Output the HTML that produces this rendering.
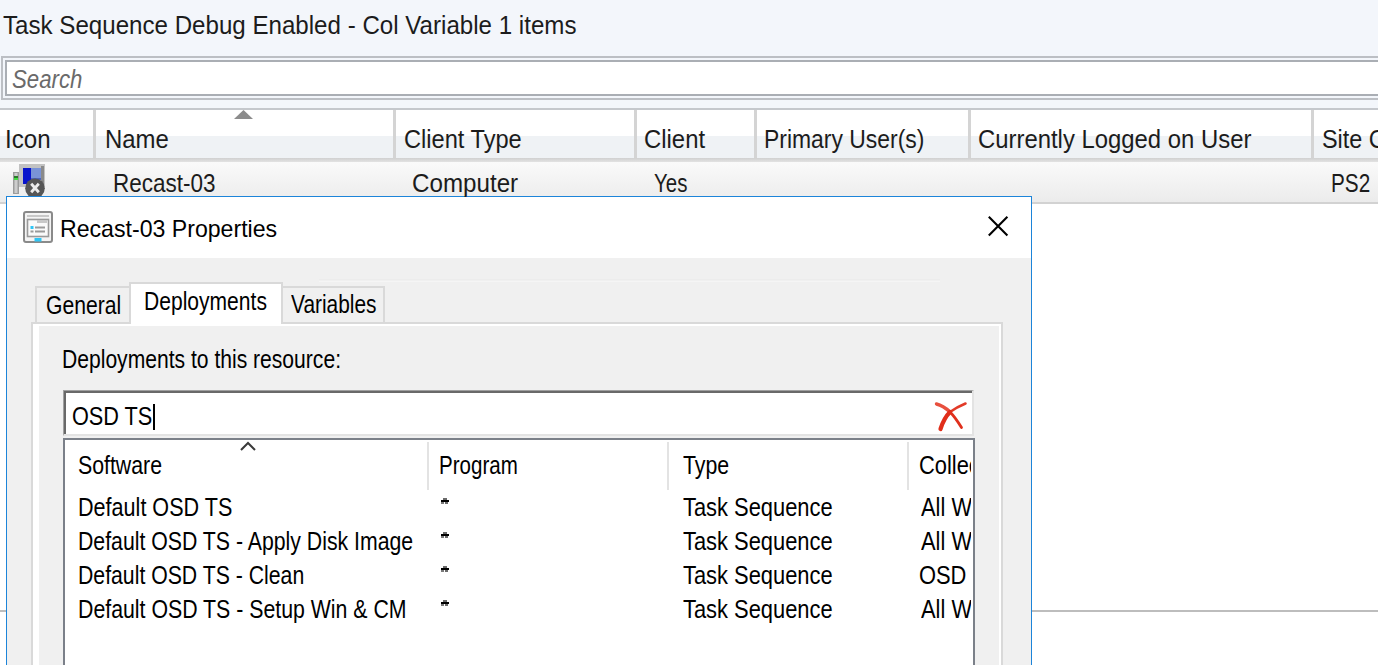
<!DOCTYPE html>
<html><head><meta charset="utf-8">
<style>
html,body{margin:0;padding:0;width:1378px;height:665px;overflow:hidden;background:#fff;position:relative}
*{box-sizing:border-box}
.a{position:absolute}
.t{position:absolute;font-family:"Liberation Sans",sans-serif;white-space:nowrap;line-height:1;transform-origin:0 0}
</style></head><body>
<!-- console top band -->
<div class="a" style="left:0;top:0;width:1378px;height:108px;background:#f3f6fb"></div>
<!-- search box -->
<div class="a" style="left:1px;top:56px;width:1390px;height:44px;border:2px solid #bcbfc4;background:#f3f6fb"></div>
<div class="a" style="left:5px;top:60px;width:1390px;height:36px;border:2px solid #aaaeb4;background:#fff"></div>
<!-- header -->
<div class="a" style="left:0;top:108px;width:1378px;height:2px;background:#c5c8cd"></div>
<div class="a" style="left:0;top:110px;width:1378px;height:26px;background:#fff"></div>
<div class="a" style="left:0;top:136px;width:1378px;height:22px;background:#eff2f5"></div>
<div class="a" style="left:0;top:158px;width:1378px;height:4px;background:linear-gradient(#d0d0d0,#e2e2e2)"></div>
<div class="a" style="left:93px;top:110px;width:3px;height:48px;background:#d4d4d4"></div>
<div class="a" style="left:393px;top:110px;width:3px;height:48px;background:#d4d4d4"></div>
<div class="a" style="left:634px;top:110px;width:3px;height:48px;background:#d4d4d4"></div>
<div class="a" style="left:754px;top:110px;width:3px;height:48px;background:#d4d4d4"></div>
<div class="a" style="left:968px;top:110px;width:3px;height:48px;background:#d4d4d4"></div>
<div class="a" style="left:1311px;top:110px;width:3px;height:48px;background:#d4d4d4"></div>
<svg class="a" style="left:234px;top:110px" width="19" height="10"><polygon points="0,9 9.5,0 19,9" fill="#8c8c8c"/></svg>
<!-- row -->
<div class="a" style="left:0;top:162px;width:1378px;height:41px;background:linear-gradient(#fafafa,#ebebeb)"></div>
<div class="a" style="left:0;top:202px;width:1378px;height:2px;background:#d2d2d2"></div>
<!-- computer icon -->
<svg class="a" style="left:12px;top:163px" width="36" height="34" viewBox="0 0 36 34">
 <rect x="1" y="9" width="6" height="22" fill="#9c9c9c"/>
 <rect x="2.5" y="10" width="3" height="20" fill="#cdcdcd"/>
 <rect x="2" y="13" width="4" height="2" fill="#2a7a2a"/>
 <rect x="2" y="15" width="4" height="2" fill="#44dd44"/>
 <rect x="7" y="1" width="26" height="23" fill="#c2c2c2"/>
 <rect x="29" y="3" width="3" height="20" fill="#8a8a8a"/>
 <rect x="11" y="5" width="18" height="12" fill="#7a93d6"/>
 <rect x="11" y="5" width="8" height="16" fill="#0814cc"/>
 <rect x="19" y="15" width="10" height="2" fill="#5064b8"/>
 <circle cx="23" cy="25.2" r="9.8" fill="#565656"/>
 <path d="M19.2 20.8 L26.8 29.2 M26.8 20.8 L19.2 29.2" stroke="#ececec" stroke-width="2.8"/>
</svg>
<!-- bottom line at right -->
<div class="a" style="left:0;top:610px;width:1378px;height:2px;background:#bdbdbd"></div>

<!-- dialog -->
<div class="a" style="left:6px;top:196px;width:1026px;height:480px;border:1px solid #1c84d9;background:#f0f0f0"></div>
<div class="a" style="left:7px;top:197px;width:1024px;height:61px;background:#fff"></div>
<!-- dialog icon -->
<svg class="a" style="left:23px;top:211px" width="30" height="32" viewBox="0 0 30 32">
 <rect x="1" y="1" width="28" height="30" rx="2" fill="#f4f4f4" stroke="#8a8a8a" stroke-width="2"/>
 <rect x="4" y="4" width="22" height="2" fill="#c8c8c8"/>
 <rect x="4.5" y="8.5" width="21" height="17" fill="#fafafa" stroke="#9a9a9a" stroke-width="1.6"/>
 <rect x="14" y="9" width="10" height="3" fill="#c8c8c8"/>
 <rect x="7.5" y="15" width="3" height="3" fill="#2ec5f5"/>
 <rect x="12" y="15.5" width="10" height="2" fill="#9a9a9a"/>
 <rect x="7.5" y="19.5" width="3" height="2" fill="#9a9a9a"/>
 <rect x="12" y="19.5" width="10" height="2" fill="#9a9a9a"/>
 <rect x="11.5" y="27" width="7" height="3.5" fill="#2ec5f5"/>
</svg>
<svg class="a" style="left:986px;top:214px" width="24" height="24"><path d="M2.8 2.8 L21.4 21.4 M21.4 2.8 L2.8 21.4" stroke="#000" stroke-width="2.1"/></svg>

<!-- tab panel -->
<div class="a" style="left:31px;top:322px;width:972px;height:400px;border:2px solid #d9d9d9;background:#fff"></div>
<div class="a" style="left:39px;top:326px;width:960px;height:400px;background:#f0f0f0"></div>
<div class="a" style="left:319px;top:279px;width:621px;height:1px;background:#ececec"></div><div class="a" style="left:319px;top:281px;width:621px;height:1px;background:#f5f5f5"></div>
<!-- tabs -->
<div class="a" style="left:35px;top:286px;width:96px;height:38px;border:2px solid #d9d9d9;border-bottom:none;background:#f0f0f0"></div>
<div class="a" style="left:35px;top:322px;width:96px;height:2px;background:#d9d9d9"></div>
<div class="a" style="left:281px;top:286px;width:104px;height:38px;border:2px solid #d9d9d9;border-bottom:none;background:#f0f0f0"></div>
<div class="a" style="left:281px;top:322px;width:104px;height:2px;background:#d9d9d9"></div>
<div class="a" style="left:129px;top:282px;width:154px;height:40px;border:2px solid #d9d9d9;border-bottom:none;background:#fff"></div>
<div class="a" style="left:131px;top:322px;width:150px;height:4px;background:#fff"></div>

<!-- filter box -->
<div class="a" style="left:63px;top:390px;width:911px;height:46px;background:#fff;border-top:1px solid #a0a0a0;border-left:1px solid #a0a0a0;border-right:2px solid #e3e3e3;border-bottom:2px solid #e3e3e3"></div>
<div class="a" style="left:64px;top:391px;width:2px;height:43px;background:#696969"></div>
<div class="a" style="left:64px;top:391px;width:908px;height:2px;background:#696969"></div>
<div class="a" style="left:153px;top:404px;width:2px;height:26px;background:#000"></div>
<svg class="a" style="left:928px;top:395px" width="50" height="45" viewBox="0 0 50 45">
 <g fill="none" stroke-linecap="round">
 <path d="M8.5 9 Q15 10.5 22 17" stroke="#e8503e" stroke-width="3.4"/>
 <path d="M22 17 Q27 22 33.5 32.5" stroke="#e0301c" stroke-width="2.8"/>
 <path d="M37.5 8.5 Q29 12 22 17" stroke="#e23a28" stroke-width="2.6"/>
 <path d="M22 17 Q16 23 12.5 34" stroke="#e02e1a" stroke-width="4.2"/>
 </g>
</svg>

<!-- listview -->
<div class="a" style="left:63px;top:438px;width:912px;height:240px;background:#fff;border:2px solid #7b8089"></div>
<div class="a" style="left:427px;top:442px;width:2px;height:48px;background:#e3e3e3"></div>
<div class="a" style="left:667px;top:442px;width:2px;height:48px;background:#e3e3e3"></div>
<div class="a" style="left:907px;top:442px;width:2px;height:48px;background:#e3e3e3"></div>
<svg class="a" style="left:239px;top:440px" width="18" height="12"><path d="M2 10 L9 3 L16 10" stroke="#3a3a3a" stroke-width="2" fill="none"/></svg>

<div class="a" style="left:443px;top:498px;width:4px;height:2px;background:#6a6a6a"></div>
<div class="a" style="left:441px;top:500px;width:8px;height:2px;background:#000"></div>
<div class="a" style="left:441px;top:502px;width:3px;height:2px;background:#7a7a7a"></div>
<div class="a" style="left:445px;top:502px;width:3px;height:2px;background:#6a6a6a"></div>
<div class="a" style="left:443px;top:532px;width:4px;height:2px;background:#6a6a6a"></div>
<div class="a" style="left:441px;top:534px;width:8px;height:2px;background:#000"></div>
<div class="a" style="left:441px;top:536px;width:3px;height:2px;background:#7a7a7a"></div>
<div class="a" style="left:445px;top:536px;width:3px;height:2px;background:#6a6a6a"></div>
<div class="a" style="left:443px;top:566px;width:4px;height:2px;background:#6a6a6a"></div>
<div class="a" style="left:441px;top:568px;width:8px;height:2px;background:#000"></div>
<div class="a" style="left:441px;top:570px;width:3px;height:2px;background:#7a7a7a"></div>
<div class="a" style="left:445px;top:570px;width:3px;height:2px;background:#6a6a6a"></div>
<div class="a" style="left:443px;top:600px;width:4px;height:2px;background:#6a6a6a"></div>
<div class="a" style="left:441px;top:602px;width:8px;height:2px;background:#000"></div>
<div class="a" style="left:441px;top:604px;width:3px;height:2px;background:#7a7a7a"></div>
<div class="a" style="left:445px;top:604px;width:3px;height:2px;background:#6a6a6a"></div>
<div class="t" style="left:2.60px;top:12.05px;font-size:26.34px;transform:scaleX(0.9162);;color:#1c1c1c">Task Sequence Debug Enabled - Col Variable 1 items</div>
<div class="t" style="left:11.96px;top:67.22px;font-size:25.17px;transform:scaleX(0.8839);font-style:italic;color:#6a6a6a">Search</div>
<div class="t" style="left:4.59px;top:126.70px;font-size:25.32px;transform:scaleX(0.9525);;color:#1c1c1c">Icon</div>
<div class="t" style="left:104.61px;top:126.70px;font-size:25.32px;transform:scaleX(0.9449);;color:#1c1c1c">Name</div>
<div class="t" style="left:404.42px;top:126.70px;font-size:25.32px;transform:scaleX(0.9334);;color:#1c1c1c">Client Type</div>
<div class="t" style="left:643.81px;top:126.70px;font-size:25.32px;transform:scaleX(0.9432);;color:#1c1c1c">Client</div>
<div class="t" style="left:764.39px;top:126.70px;font-size:25.32px;transform:scaleX(0.9053);;color:#1c1c1c">Primary User(s)</div>
<div class="t" style="left:977.61px;top:126.70px;font-size:25.32px;transform:scaleX(0.9431);;color:#1c1c1c">Currently Logged on User</div>
<div class="t" style="left:1322.23px;top:126.70px;font-size:25.32px;transform:scaleX(0.9250);;color:#1c1c1c">Site Code</div>
<div class="t" style="left:113.03px;top:170.70px;font-size:25.32px;transform:scaleX(0.8883);;color:#1c1c1c">Recast-03</div>
<div class="t" style="left:412.39px;top:170.70px;font-size:25.32px;transform:scaleX(0.9553);;color:#1c1c1c">Computer</div>
<div class="t" style="left:653.92px;top:170.70px;font-size:25.32px;transform:scaleX(0.8093);;color:#1c1c1c">Yes</div>
<div class="t" style="left:1330.77px;top:170.70px;font-size:25.32px;transform:scaleX(0.8193);;color:#1c1c1c">PS2</div>
<div class="t" style="left:59.87px;top:216.70px;font-size:24.00px;transform:scaleX(0.9631);;color:#000">Recast-03 Properties</div>
<div class="t" style="left:45.54px;top:293.02px;font-size:25.17px;transform:scaleX(0.8395);;color:#000">General</div>
<div class="t" style="left:143.64px;top:288.82px;font-size:25.17px;transform:scaleX(0.8374);;color:#000">Deployments</div>
<div class="t" style="left:290.70px;top:292.42px;font-size:25.17px;transform:scaleX(0.8304);;color:#000">Variables</div>
<div class="t" style="left:61.94px;top:347.02px;font-size:25.17px;transform:scaleX(0.8384);;color:#000">Deployments to this resource:</div>
<div class="t" style="left:71.52px;top:404.38px;font-size:25.46px;transform:scaleX(0.8513);;color:#000">OSD TS</div>
<div class="t" style="left:78.24px;top:453.02px;font-size:25.17px;transform:scaleX(0.8462);;color:#000">Software</div>
<div class="t" style="left:439.49px;top:453.02px;font-size:25.17px;transform:scaleX(0.8165);;color:#000">Program</div>
<div class="t" style="left:682.54px;top:453.02px;font-size:25.17px;transform:scaleX(0.8475);;color:#000">Type</div>
<div class="t" style="left:78.10px;top:495.02px;font-size:25.17px;transform:scaleX(0.8578);;color:#000">Default OSD TS</div>
<div class="t" style="left:78.13px;top:529.02px;font-size:25.17px;transform:scaleX(0.8452);;color:#000">Default OSD TS - Apply Disk Image</div>
<div class="t" style="left:78.13px;top:563.02px;font-size:25.17px;transform:scaleX(0.8441);;color:#000">Default OSD TS - Clean</div>
<div class="t" style="left:78.12px;top:597.02px;font-size:25.17px;transform:scaleX(0.8465);;color:#000">Default OSD TS - Setup Win &amp; CM</div>
<div class="t" style="left:682.54px;top:495.02px;font-size:25.17px;transform:scaleX(0.8697);;color:#000">Task Sequence</div>
<div class="t" style="left:682.54px;top:529.02px;font-size:25.17px;transform:scaleX(0.8697);;color:#000">Task Sequence</div>
<div class="t" style="left:682.54px;top:563.02px;font-size:25.17px;transform:scaleX(0.8697);;color:#000">Task Sequence</div>
<div class="t" style="left:682.54px;top:597.02px;font-size:25.17px;transform:scaleX(0.8697);;color:#000">Task Sequence</div>
<div class="a" style="left:0;top:0;width:1378px;height:665px;clip-path:inset(440px 407px 0 910px)">
<div class="t" style="left:919.21px;top:453.02px;font-size:25.17px;transform:scaleX(0.8700);;color:#000">Collection</div>
<div class="t" style="left:921.00px;top:495.02px;font-size:25.17px;transform:scaleX(0.8700);;color:#000">All Workstations</div>
<div class="t" style="left:921.00px;top:529.02px;font-size:25.17px;transform:scaleX(0.8700);;color:#000">All Workstations</div>
<div class="t" style="left:919.21px;top:563.02px;font-size:25.17px;transform:scaleX(0.8700);;color:#000">OSD Collection</div>
<div class="t" style="left:921.00px;top:597.02px;font-size:25.17px;transform:scaleX(0.8700);;color:#000">All Workstations</div>
</div>
</body></html>
